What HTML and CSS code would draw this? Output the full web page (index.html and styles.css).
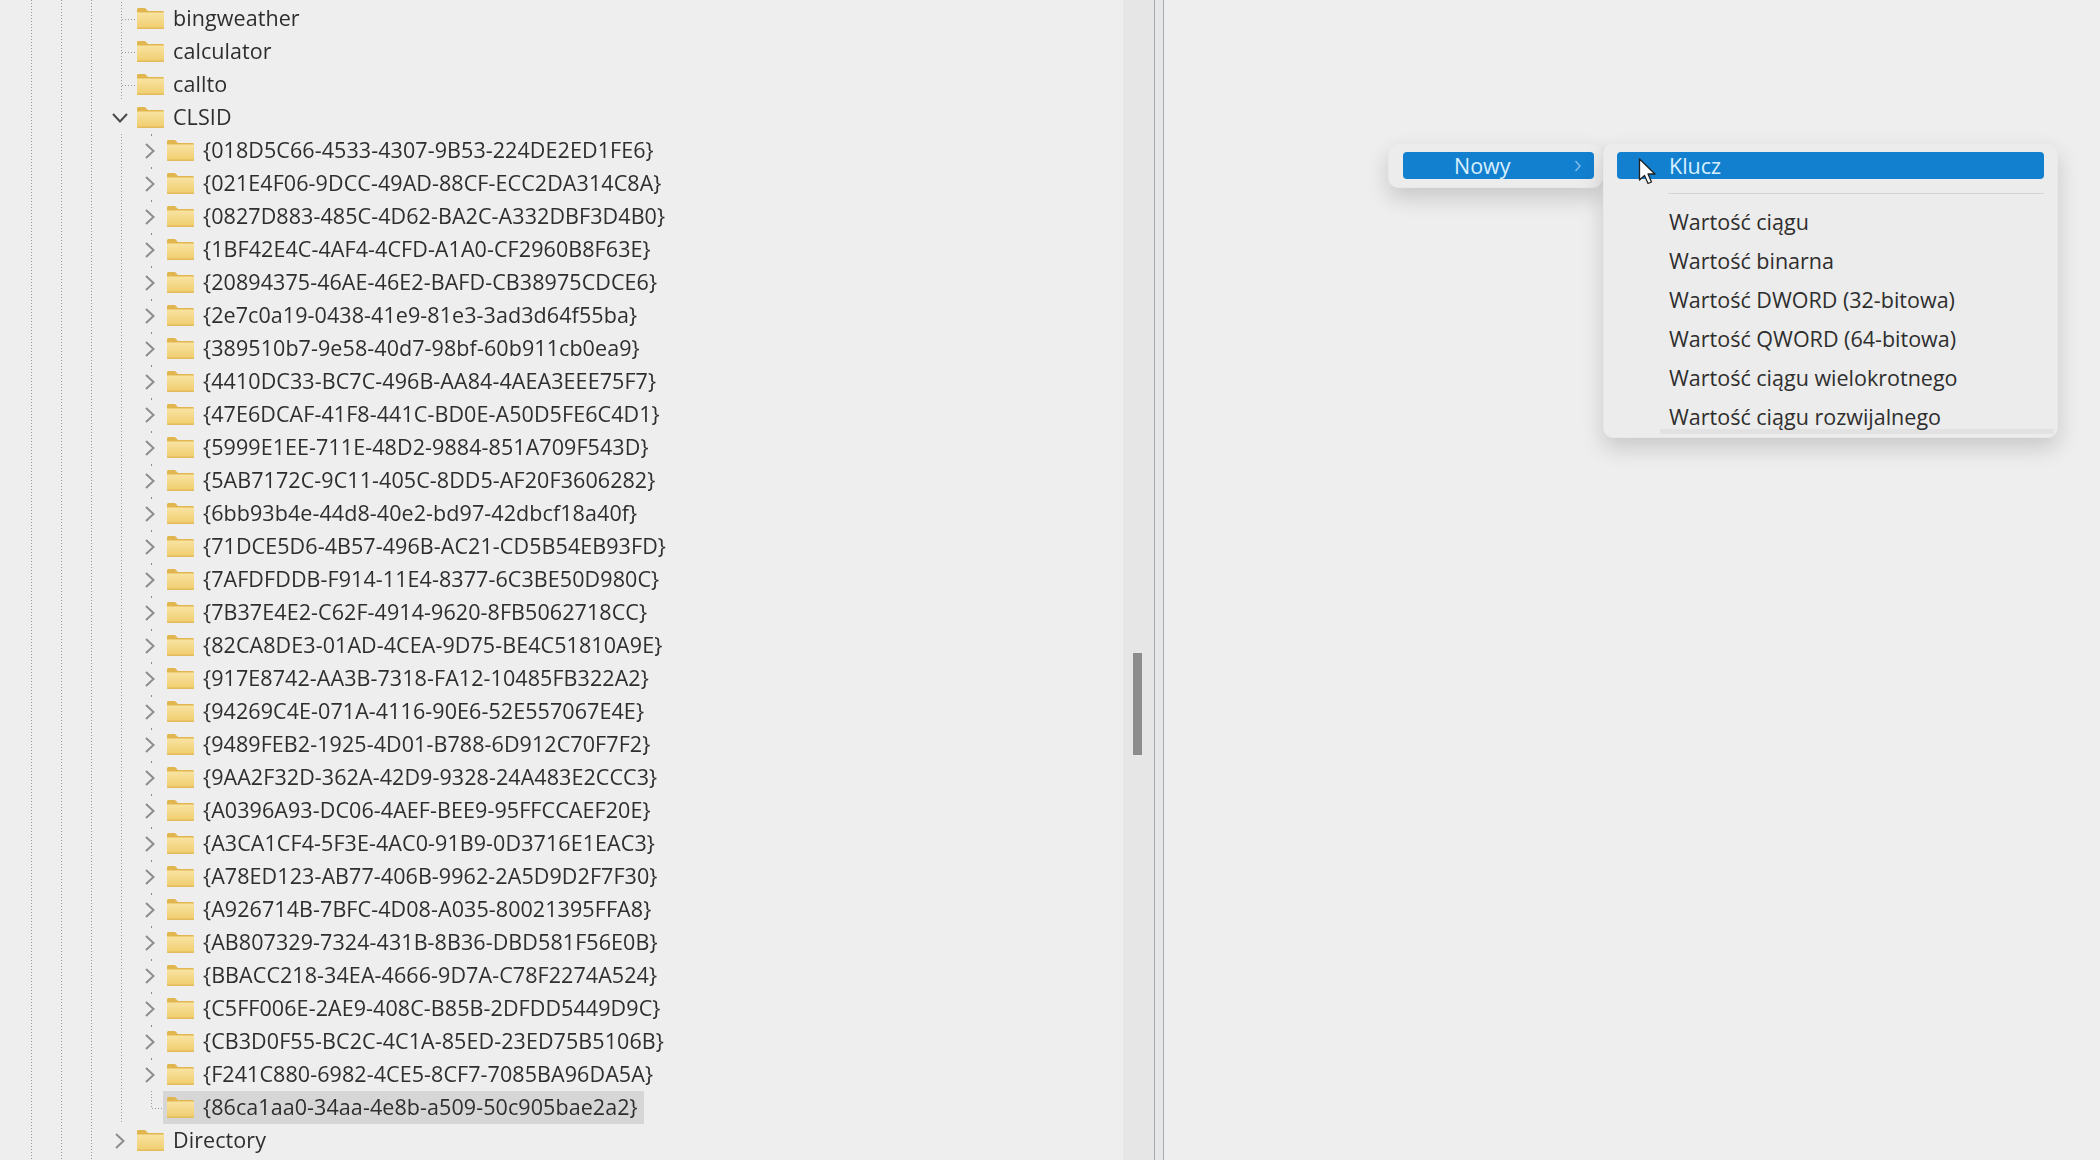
FILE: index.html
```html
<!DOCTYPE html>
<html lang="pl">
  <head>
    <meta charset="utf-8">
    <title>Edytor rejestru</title>
    <link rel="stylesheet" href="styles.css">
  </head>
  <body>
    <svg class="defs" width="0" height="0">
      <symbol id="folder" viewBox="0 0 27 21">
        <defs>
          <linearGradient id="folder_body" x1="0" y1="0" x2="0" y2="1">
            <stop offset="0" stop-color="#f8e3a2"/>
            <stop offset="1" stop-color="#f0cd6c"/>
          </linearGradient>
        </defs>
        <path d="M0 1.500C0 .7.7 0 1.500 0H8l3 3h14.500c.8 0 1.500.7 1.500 1.500V6H0z" fill="#e2b64e"/>
        <path d="M0 4.500h27v15c0 .8-.7 1.500-1.500 1.500h-24C.7 21 0 20.300 0 19.500z" fill="url(#folder_body)"/>
        <path d="M0 19.500h27V20c0 .6-.5 1-1 1H1c-.5 0-1-.4-1-1z" fill="#e4bb5c"/>
      </symbol>
      <symbol id="chev_right" viewBox="0 0 14 18">
        <path d="M3 2l7.500 7L3 16" fill="none" stroke="#8d8d8d" stroke-width="2"/>
      </symbol>
      <symbol id="chev_down" viewBox="0 0 18 14">
        <path d="M2 3l7 7.500L16 3" fill="none" stroke="#4a4a4a" stroke-width="2"/>
      </symbol>
    </svg>

    <div class="window">
      <div class="tree_pane">
        <div class="row l1 leaf"><span class="exp"></span><span class="node"><svg class="folder"><use href="#folder"/></svg><span>bingweather</span></span></div>
        <div class="row l1 leaf"><span class="exp"></span><span class="node"><svg class="folder"><use href="#folder"/></svg><span>calculator</span></span></div>
        <div class="row l1 leaf"><span class="exp"></span><span class="node"><svg class="folder"><use href="#folder"/></svg><span>callto</span></span></div>
        <div class="row l1"><span class="exp"><svg class="down"><use href="#chev_down"/></svg></span><span class="node"><svg class="folder"><use href="#folder"/></svg><span>CLSID</span></span></div>
        <div class="row l2"><span class="exp"><svg class="right"><use href="#chev_right"/></svg></span><span class="node"><svg class="folder"><use href="#folder"/></svg><span>{018D5C66-4533-4307-9B53-224DE2ED1FE6}</span></span></div>
        <div class="row l2"><span class="exp"><svg class="right"><use href="#chev_right"/></svg></span><span class="node"><svg class="folder"><use href="#folder"/></svg><span>{021E4F06-9DCC-49AD-88CF-ECC2DA314C8A}</span></span></div>
        <div class="row l2"><span class="exp"><svg class="right"><use href="#chev_right"/></svg></span><span class="node"><svg class="folder"><use href="#folder"/></svg><span>{0827D883-485C-4D62-BA2C-A332DBF3D4B0}</span></span></div>
        <div class="row l2"><span class="exp"><svg class="right"><use href="#chev_right"/></svg></span><span class="node"><svg class="folder"><use href="#folder"/></svg><span>{1BF42E4C-4AF4-4CFD-A1A0-CF2960B8F63E}</span></span></div>
        <div class="row l2"><span class="exp"><svg class="right"><use href="#chev_right"/></svg></span><span class="node"><svg class="folder"><use href="#folder"/></svg><span>{20894375-46AE-46E2-BAFD-CB38975CDCE6}</span></span></div>
        <div class="row l2"><span class="exp"><svg class="right"><use href="#chev_right"/></svg></span><span class="node"><svg class="folder"><use href="#folder"/></svg><span>{2e7c0a19-0438-41e9-81e3-3ad3d64f55ba}</span></span></div>
        <div class="row l2"><span class="exp"><svg class="right"><use href="#chev_right"/></svg></span><span class="node"><svg class="folder"><use href="#folder"/></svg><span>{389510b7-9e58-40d7-98bf-60b911cb0ea9}</span></span></div>
        <div class="row l2"><span class="exp"><svg class="right"><use href="#chev_right"/></svg></span><span class="node"><svg class="folder"><use href="#folder"/></svg><span>{4410DC33-BC7C-496B-AA84-4AEA3EEE75F7}</span></span></div>
        <div class="row l2"><span class="exp"><svg class="right"><use href="#chev_right"/></svg></span><span class="node"><svg class="folder"><use href="#folder"/></svg><span>{47E6DCAF-41F8-441C-BD0E-A50D5FE6C4D1}</span></span></div>
        <div class="row l2"><span class="exp"><svg class="right"><use href="#chev_right"/></svg></span><span class="node"><svg class="folder"><use href="#folder"/></svg><span>{5999E1EE-711E-48D2-9884-851A709F543D}</span></span></div>
        <div class="row l2"><span class="exp"><svg class="right"><use href="#chev_right"/></svg></span><span class="node"><svg class="folder"><use href="#folder"/></svg><span>{5AB7172C-9C11-405C-8DD5-AF20F3606282}</span></span></div>
        <div class="row l2"><span class="exp"><svg class="right"><use href="#chev_right"/></svg></span><span class="node"><svg class="folder"><use href="#folder"/></svg><span>{6bb93b4e-44d8-40e2-bd97-42dbcf18a40f}</span></span></div>
        <div class="row l2"><span class="exp"><svg class="right"><use href="#chev_right"/></svg></span><span class="node"><svg class="folder"><use href="#folder"/></svg><span>{71DCE5D6-4B57-496B-AC21-CD5B54EB93FD}</span></span></div>
        <div class="row l2"><span class="exp"><svg class="right"><use href="#chev_right"/></svg></span><span class="node"><svg class="folder"><use href="#folder"/></svg><span>{7AFDFDDB-F914-11E4-8377-6C3BE50D980C}</span></span></div>
        <div class="row l2"><span class="exp"><svg class="right"><use href="#chev_right"/></svg></span><span class="node"><svg class="folder"><use href="#folder"/></svg><span>{7B37E4E2-C62F-4914-9620-8FB5062718CC}</span></span></div>
        <div class="row l2"><span class="exp"><svg class="right"><use href="#chev_right"/></svg></span><span class="node"><svg class="folder"><use href="#folder"/></svg><span>{82CA8DE3-01AD-4CEA-9D75-BE4C51810A9E}</span></span></div>
        <div class="row l2"><span class="exp"><svg class="right"><use href="#chev_right"/></svg></span><span class="node"><svg class="folder"><use href="#folder"/></svg><span>{917E8742-AA3B-7318-FA12-10485FB322A2}</span></span></div>
        <div class="row l2"><span class="exp"><svg class="right"><use href="#chev_right"/></svg></span><span class="node"><svg class="folder"><use href="#folder"/></svg><span>{94269C4E-071A-4116-90E6-52E557067E4E}</span></span></div>
        <div class="row l2"><span class="exp"><svg class="right"><use href="#chev_right"/></svg></span><span class="node"><svg class="folder"><use href="#folder"/></svg><span>{9489FEB2-1925-4D01-B788-6D912C70F7F2}</span></span></div>
        <div class="row l2"><span class="exp"><svg class="right"><use href="#chev_right"/></svg></span><span class="node"><svg class="folder"><use href="#folder"/></svg><span>{9AA2F32D-362A-42D9-9328-24A483E2CCC3}</span></span></div>
        <div class="row l2"><span class="exp"><svg class="right"><use href="#chev_right"/></svg></span><span class="node"><svg class="folder"><use href="#folder"/></svg><span>{A0396A93-DC06-4AEF-BEE9-95FFCCAEF20E}</span></span></div>
        <div class="row l2"><span class="exp"><svg class="right"><use href="#chev_right"/></svg></span><span class="node"><svg class="folder"><use href="#folder"/></svg><span>{A3CA1CF4-5F3E-4AC0-91B9-0D3716E1EAC3}</span></span></div>
        <div class="row l2"><span class="exp"><svg class="right"><use href="#chev_right"/></svg></span><span class="node"><svg class="folder"><use href="#folder"/></svg><span>{A78ED123-AB77-406B-9962-2A5D9D2F7F30}</span></span></div>
        <div class="row l2"><span class="exp"><svg class="right"><use href="#chev_right"/></svg></span><span class="node"><svg class="folder"><use href="#folder"/></svg><span>{A926714B-7BFC-4D08-A035-80021395FFA8}</span></span></div>
        <div class="row l2"><span class="exp"><svg class="right"><use href="#chev_right"/></svg></span><span class="node"><svg class="folder"><use href="#folder"/></svg><span>{AB807329-7324-431B-8B36-DBD581F56E0B}</span></span></div>
        <div class="row l2"><span class="exp"><svg class="right"><use href="#chev_right"/></svg></span><span class="node"><svg class="folder"><use href="#folder"/></svg><span>{BBACC218-34EA-4666-9D7A-C78F2274A524}</span></span></div>
        <div class="row l2"><span class="exp"><svg class="right"><use href="#chev_right"/></svg></span><span class="node"><svg class="folder"><use href="#folder"/></svg><span>{C5FF006E-2AE9-408C-B85B-2DFDD5449D9C}</span></span></div>
        <div class="row l2"><span class="exp"><svg class="right"><use href="#chev_right"/></svg></span><span class="node"><svg class="folder"><use href="#folder"/></svg><span>{CB3D0F55-BC2C-4C1A-85ED-23ED75B5106B}</span></span></div>
        <div class="row l2"><span class="exp"><svg class="right"><use href="#chev_right"/></svg></span><span class="node"><svg class="folder"><use href="#folder"/></svg><span>{F241C880-6982-4CE5-8CF7-7085BA96DA5A}</span></span></div>
        <div class="row l2 last"><span class="exp"></span><span class="node selected"><svg class="folder"><use href="#folder"/></svg><span>{86ca1aa0-34aa-4e8b-a509-50c905bae2a2}</span></span></div>
        <div class="row l1"><span class="exp"><svg class="right"><use href="#chev_right"/></svg></span><span class="node"><svg class="folder"><use href="#folder"/></svg><span>Directory</span></span></div>
      </div>

      <div class="scrollbar"><div class="thumb"></div></div>
      <div class="splitter"></div>
      <div class="value_pane"></div>
    </div>

    <!-- context menu over the value pane -->
    <div class="menus">
      <div class="menu parent_menu">
        <div class="item active nowy"><span>Nowy</span><svg class="sub_arrow" viewBox="0 0 8 14"><path d="M1.500 2l4.500 5-4.500 5" fill="none" stroke="#7fbce8" stroke-width="1.500"/></svg></div>
      </div>
      <div class="menu sub_menu">
        <div class="item active">Klucz</div>
        <div class="sep"></div>
        <div class="item">Wartość ciągu</div>
        <div class="item">Wartość binarna</div>
        <div class="item">Wartość DWORD (32-bitowa)</div>
        <div class="item">Wartość QWORD (64-bitowa)</div>
        <div class="item">Wartość ciągu wielokrotnego</div>
        <div class="item">Wartość ciągu rozwijalnego</div>
      </div>
    </div>

    <svg class="cursor" viewBox="0 0 20 28">
      <path d="M1.500 1v21l5-4.500 3.500 8 3.500-1.500-3.500-8h7z" fill="#fff" stroke="#222" stroke-width="1.300" stroke-linejoin="round"/>
    </svg>
  </body>
</html>
```

FILE: styles.css
```css
body {
    margin: 0;
    height: 1160px;
    overflow: hidden;
    background: #eeeeee;
    font-family: 'Open Sans', sans-serif;
    font-size: 21.5px;
    color: #2e2e2e;
}
.defs {
    display: block;
}

.window {
    display: flex;
    height: 1160px;
}

/* left side, the key tree */
.tree_pane {
    width: 1123px;
    padding-top: 2px;
    box-sizing: border-box;
    overflow: hidden;
    background-image:
        repeating-linear-gradient(to bottom, #9a9a9a 0 1px, transparent 1px 3px),
        repeating-linear-gradient(to bottom, #9a9a9a 0 1px, transparent 1px 3px),
        repeating-linear-gradient(to bottom, #9a9a9a 0 1px, transparent 1px 3px);
    background-size: 1px 100%;
    background-position: 31px 0, 61px 0, 91px 0;
    background-repeat: no-repeat;
}
.row {
    display: flex;
    height: 33px;
    box-sizing: border-box;
    background-repeat: no-repeat;
}
.row.l1 {
    padding-left: 107px;
}
.row.l2 {
    padding-left: 137px;
}
.row.leaf {
    background-image:
        repeating-linear-gradient(to bottom, #9a9a9a 0 1px, transparent 1px 3px),
        repeating-linear-gradient(to right, #9a9a9a 0 1px, transparent 1px 3px);
    background-size: 1px 100%, 13px 1px;
    background-position: 121px 0, 122px 17px;
}
/* line of the parent key, plus the single dots between the arrows */
.row.l2 {
    background-image:
        repeating-linear-gradient(to bottom, #9a9a9a 0 1px, transparent 1px 3px),
        linear-gradient(#8a8a8a, #8a8a8a);
    background-size: 1px 100%, 1px 2px;
    background-position: 121px 0, 151px 0;
}
.row.l2.last {
    background-image:
        repeating-linear-gradient(to bottom, #9a9a9a 0 1px, transparent 1px 3px),
        repeating-linear-gradient(to bottom, #9a9a9a 0 1px, transparent 1px 3px),
        repeating-linear-gradient(to right, #9a9a9a 0 1px, transparent 1px 3px);
    background-size: 1px 100%, 1px 18px, 12px 1px;
    background-position: 121px 0, 151px 0, 152px 17px;
}
.exp {
    display: flex;
    align-items: center;
    width: 26px;
    flex: none;
}
.exp .right {
    width: 14px;
    height: 18px;
    margin-left: 6px;
}
.exp .down {
    width: 18px;
    height: 14px;
    margin-left: 4px;
}
.node {
    display: flex;
    align-items: center;
    gap: 9px;
    padding: 0 6px 0 4px;
    white-space: nowrap;
    letter-spacing: 0.08px;
}
.node span {
    padding-bottom: 2px;
    filter: blur(0.3px);
}
.node.selected {
    background: #d6d6d6;
}
.folder {
    width: 27px;
    height: 21px;
    flex: none;
}

.scrollbar {
    width: 31px;
    background: #e6e6e6;
    padding: 653px 0 0 10px;
    box-sizing: border-box;
}
.thumb {
    width: 9px;
    height: 102px;
    background: #8c8c8c;
}
.splitter {
    width: 10px;
    box-sizing: border-box;
    background: #e6e7e8;
    border-left: 1px solid #a6a8aa;
    border-right: 1px solid #a6a8aa;
}
.value_pane {
    flex: 1;
}

/* context menu */
.menus {
    position: absolute;
    left: 1388px;
    top: 143px;
    display: flex;
    align-items: flex-start;
}
.menu {
    background: #ececec;
    border: 1px solid #e8e8e8;
    border-radius: 10px;
    box-shadow: 0 10px 22px rgba(0, 0, 0, 0.16);
    box-sizing: border-box;
}
.parent_menu {
    width: 215px;
    height: 45px;
    padding: 8px 8px 0 14px;
}
.sub_menu {
    width: 455px;
    height: 295px;
    padding: 8px 13px 0 13px;
    background-image: linear-gradient(#e2e2e2, #e2e2e2);
    background-size: 394px 5px;
    background-position: right 3px bottom 3px;
    background-repeat: no-repeat;
}
.item {
    height: 39px;
    padding-left: 52px;
    padding-bottom: 2px;
    box-sizing: border-box;
    display: flex;
    align-items: center;
}
.item.active {
    height: 27px;
    padding-bottom: 0;
    background: #127fcf;
    color: #d8efff;
    border-radius: 4px;
}
.item.nowy {
    padding-left: 51px;
    justify-content: space-between;
    padding-right: 12px;
}
.sub_arrow {
    width: 8px;
    height: 14px;
}
.sep {
    height: 1px;
    background: #d4d4d4;
    margin: 14px 0 9px 51px;
}
.cursor {
    position: absolute;
    left: 1638px;
    top: 158px;
    width: 20px;
    height: 28px;
}
```
